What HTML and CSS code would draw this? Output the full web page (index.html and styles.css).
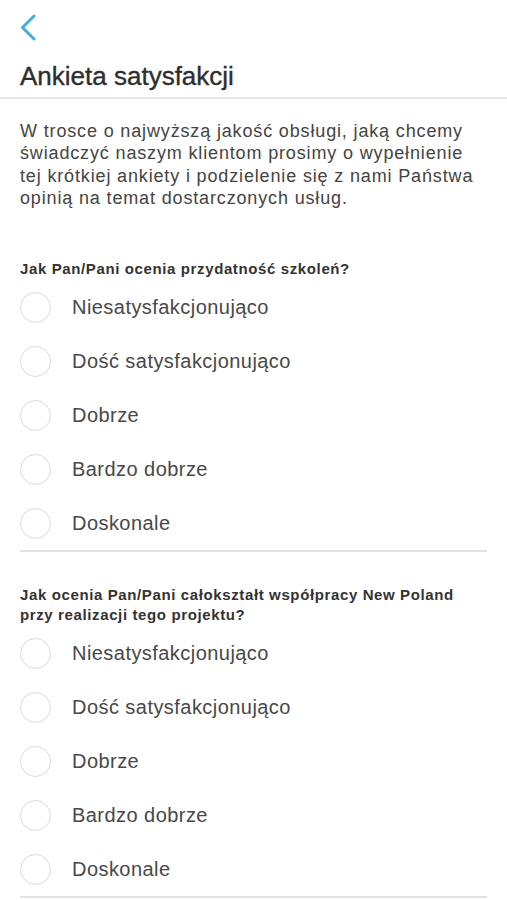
FILE: index.html
```html
<!DOCTYPE html>
<html lang="pl">
<head>
<meta charset="utf-8">
<title>Ankieta satysfakcji</title>
<link rel="stylesheet" href="styles.css">
</head>
<body>
<header class="header">
  <nav class="nav">
    <button class="back" aria-label="Wstecz">
      <svg width="20" height="28" viewBox="0 0 20 28" aria-hidden="true"><path d="M15 3 L3.5 14.5 L15 26" fill="none" stroke="#45ade0" stroke-width="3" stroke-linecap="round" stroke-linejoin="round"/></svg>
    </button>
  </nav>
  <h1 class="title">Ankieta satysfakcji</h1>
</header>
<main class="content">
  <p class="intro">W trosce o najwyższą jakość obsługi, jaką chcemy świadczyć naszym klientom prosimy o wypełnienie tej krótkiej ankiety i podzielenie się z nami Państwa opinią na temat dostarczonych usług.</p>

  <section class="question q1">
    <h2 class="q-text">Jak Pan/Pani ocenia przydatność szkoleń?</h2>
    <ul class="options">
      <li class="option"><span class="radio"></span><span class="label">Niesatysfakcjonująco</span></li>
      <li class="option"><span class="radio"></span><span class="label">Dość satysfakcjonująco</span></li>
      <li class="option"><span class="radio"></span><span class="label">Dobrze</span></li>
      <li class="option"><span class="radio"></span><span class="label">Bardzo dobrze</span></li>
      <li class="option"><span class="radio"></span><span class="label">Doskonale</span></li>
    </ul>
  </section>

  <section class="question q2">
    <h2 class="q-text">Jak ocenia Pan/Pani całokształt współpracy New Poland przy realizacji tego projektu?</h2>
    <ul class="options">
      <li class="option"><span class="radio"></span><span class="label">Niesatysfakcjonująco</span></li>
      <li class="option"><span class="radio"></span><span class="label">Dość satysfakcjonująco</span></li>
      <li class="option"><span class="radio"></span><span class="label">Dobrze</span></li>
      <li class="option"><span class="radio"></span><span class="label">Bardzo dobrze</span></li>
      <li class="option"><span class="radio"></span><span class="label">Doskonale</span></li>
    </ul>
  </section>
</main>
</body>
</html>
```

FILE: styles.css
```css
* { box-sizing: border-box; }
html, body { margin: 0; padding: 0; background: #fff; }
body {
  font-family: "Liberation Sans", Arial, sans-serif;
  color: #444;
}
.header {
  border-bottom: 2px solid #e8e8e8;
  padding-bottom: 6px;
}
.nav {
  height: 50px;
  padding: 13px 0 0 19px;
}
.back {
  display: block;
  padding: 0;
  border: 0;
  background: none;
  width: 20px;
  height: 28px;
}
.back svg { display: block; }
.title {
  margin: 11px 0 0 20px;
  font-size: 26px;
  line-height: 30px;
  font-weight: normal;
  color: #2d2d2d;
  -webkit-text-stroke: 0.35px #2d2d2d;
}
.content {
  padding: 0 20px;
}
.intro {
  margin: 20.5px 0 0;
  font-size: 18px;
  line-height: 22.5px;
  letter-spacing: 0.85px;
  color: #444;
}
.q1 { margin-top: 49px; }
.q2 { margin-top: 32.5px; }
.q-text {
  margin: 0 0 1.5px;
  font-size: 15px;
  line-height: 20px;
  font-weight: bold;
  letter-spacing: 0.62px;
  color: #333;
}
.options {
  list-style: none;
  margin: 0;
  padding: 0;
  border-bottom: 2px solid #e2e2e2;
}
.option {
  display: flex;
  align-items: center;
  height: 54px;
}
.radio {
  flex: none;
  width: 31px;
  height: 31px;
  border: 1.5px solid #dadada;
  border-radius: 50%;
  margin-right: 21px;
}
.label {
  font-size: 20px;
  letter-spacing: 0.45px;
  color: #484848;
}
```
